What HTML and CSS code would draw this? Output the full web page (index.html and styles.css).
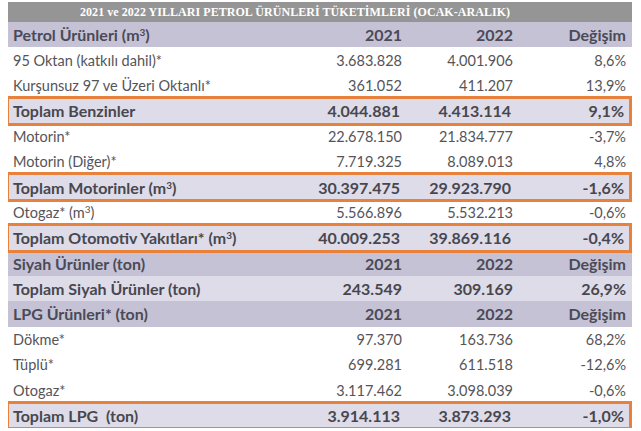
FILE: index.html
```html
<!DOCTYPE html>
<html lang="tr">
<head>
<meta charset="utf-8">
<link rel="stylesheet" href="styles.css">
</head>
<body>
<div class="tbl">
  <div class="title">2021 ve 2022 YILLARI PETROL ÜRÜNLERİ TÜKETİMLERİ (OCAK-ARALIK)</div>

  <div class="row head"><span class="lbl">Petrol Ürünleri (m<sup>3</sup>)</span><span>2021</span><span>2022</span><span>Değişim</span></div>
  <div class="row"><span class="lbl">95 Oktan (katkılı dahil)*</span><span>3.683.828</span><span>4.001.906</span><span>8,6%</span></div>
  <div class="row"><span class="lbl">Kurşunsuz 97 ve Üzeri Oktanlı*</span><span>361.052</span><span>411.207</span><span>13,9%</span></div>
  <div class="row total boxed"><span class="lbl">Toplam Benzinler</span><span>4.044.881</span><span>4.413.114</span><span>9,1%</span></div>
  <div class="row"><span class="lbl">Motorin*</span><span>22.678.150</span><span>21.834.777</span><span>-3,7%</span></div>
  <div class="row"><span class="lbl">Motorin (Diğer)*</span><span>7.719.325</span><span>8.089.013</span><span>4,8%</span></div>
  <div class="row total boxed"><span class="lbl">Toplam Motorinler (m<sup>3</sup>)</span><span>30.397.475</span><span>29.923.790</span><span>-1,6%</span></div>
  <div class="row"><span class="lbl">Otogaz* (m<sup>3</sup>)</span><span>5.566.896</span><span>5.532.213</span><span>-0,6%</span></div>
  <div class="row total boxed"><span class="lbl">Toplam Otomotiv Yakıtları* (m<sup>3</sup>)</span><span>40.009.253</span><span>39.869.116</span><span>-0,4%</span></div>

  <div class="row head"><span class="lbl">Siyah Ürünler (ton)</span><span>2021</span><span>2022</span><span>Değişim</span></div>
  <div class="row total"><span class="lbl">Toplam Siyah Ürünler (ton)</span><span>243.549</span><span>309.169</span><span>26,9%</span></div>

  <div class="row head"><span class="lbl">LPG Ürünleri* (ton)</span><span>2021</span><span>2022</span><span>Değişim</span></div>
  <div class="row"><span class="lbl">Dökme*</span><span>97.370</span><span>163.736</span><span>68,2%</span></div>
  <div class="row"><span class="lbl">Tüplü*</span><span>699.281</span><span>611.518</span><span>-12,6%</span></div>
  <div class="row"><span class="lbl">Otogaz*</span><span>3.117.462</span><span>3.098.039</span><span>-0,6%</span></div>
  <div class="row total boxed"><span class="lbl">Toplam LPG&nbsp; (ton)</span><span>3.914.113</span><span>3.873.293</span><span>-1,0%</span></div>
</div>
</body>
</html>
```

FILE: styles.css
```css
html, body {
  background: #ffffff;
}
body {
  margin: 2px 0 0 8px;
  font-family: Lato, "Noto Sans", sans-serif;
  color: #555459;
}
.tbl {
  width: 624px;
}
.title {
  height: 20px;
  line-height: 21px;
  background: #959595;
  color: #ffffff;
  font-family: "Liberation Serif", serif;
  font-weight: bold;
  font-size: 12px;
  padding-left: 72px;
  letter-spacing: 0.05px;
  white-space: nowrap;
}
.row {
  display: grid;
  grid-template-columns: 1fr 112px 111px 113px;
  height: 25.4px;
  align-items: center;
  font-size: 14.5px;
  white-space: nowrap;
}
.row > span {
  text-align: right;
  padding-right: 6px;
}
.row > span.lbl {
  text-align: left;
  padding-left: 5px;
  padding-right: 0;
}
.row.head {
  background: #c4c2d4;
  font-weight: bold;
  font-size: 16px;
  color: #4b4a57;
}
.row.total {
  background: #dddce8;
  font-weight: bold;
  font-size: 16px;
  color: #48474f;
}
.row.boxed {
  outline: 3px solid #e8813b;
  outline-offset: -1px;
  position: relative;
  z-index: 1;
  margin-right: 2px;
}
sup {
  font-size: 10px;
  line-height: 0;
  vertical-align: 5px;
}
```
